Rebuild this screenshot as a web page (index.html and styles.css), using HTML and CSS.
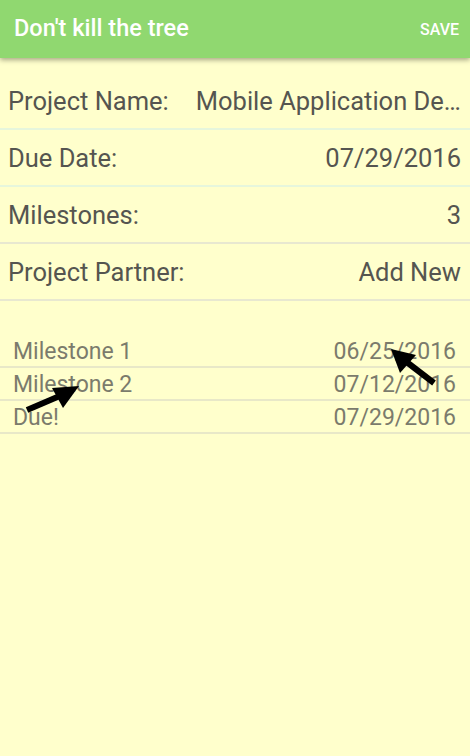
FILE: index.html
```html
<!DOCTYPE html>
<html>
<head>
<meta charset="utf-8">
<link rel="stylesheet" href="styles.css">
</head>
<body>
<div class="app">
  <header class="bar">
    <span class="title">Don't kill the tree</span>
    <span class="save">SAVE</span>
  </header>
  <main class="content">
    <div class="fields">
      <div class="row mint"><span class="label">Project Name:</span><span class="value ellipsis">Mobile Application Development</span></div>
      <div class="row mint"><span class="label">Due Date:</span><span class="value">07/29/2016</span></div>
      <div class="row grey"><span class="label">Milestones:</span><span class="value">3</span></div>
      <div class="row grey"><span class="label">Project Partner:</span><span class="value">Add New</span></div>
    </div>
    <div class="milestones">
      <div class="mrow"><span>Milestone 1</span><span>06/25/2016</span></div>
      <div class="mrow"><span>Milestone 2</span><span>07/12/2016</span></div>
      <div class="mrow"><span>Due!</span><span>07/29/2016</span></div>
    </div>
  </main>
  <svg class="arrows" width="470" height="756" viewBox="0 0 470 756">
    <line x1="434" y1="383" x2="404" y2="360" stroke="#000" stroke-width="6"/>
    <polygon points="391,349 416,355 400,373" fill="#000"/>
    <line x1="27" y1="410" x2="62" y2="395" stroke="#000" stroke-width="6"/>
    <polygon points="79,386 63,408 52,388" fill="#000"/>
  </svg>
</div>
</body>
</html>
```
FILE: styles.css
```css
* { box-sizing: border-box; }
html, body { margin: 0; padding: 0; }
body {
  width: 470px;
  height: 756px;
  background: #ffffcc;
  font-family: Roboto, "Noto Sans", sans-serif;
  overflow: hidden;
}
.app { position: relative; width: 470px; height: 756px; }
.bar {
  height: 58px;
  background: #90d870;
  display: flex;
  align-items: center;
  justify-content: space-between;
  padding: 0 11px 0 14px;
  box-shadow: 0 2px 5px rgba(0,0,0,0.35);
  position: relative;
  z-index: 1;
}
.title {
  color: #fff;
  font-size: 23.5px;
  font-weight: 500;
  padding-bottom: 2px;
}
.save {
  color: #fff;
  font-size: 16px;
  font-weight: 500;
}
.content { padding-top: 15px; }
.row {
  height: 57px;
  display: flex;
  align-items: center;
  justify-content: space-between;
  font-size: 25.5px;
  color: #555550;
  padding: 0 9px 0 8px;
}
.row.mint { border-bottom: 2px solid #e6f6dc; }
.row.grey { border-bottom: 2px solid #e8e8d0; }
.label { white-space: nowrap; flex: none; }
.value { white-space: nowrap; text-align: right; }
.ellipsis {
  overflow: hidden;
  text-overflow: ellipsis;
  margin-left: 27px;
  min-width: 0;
}
.milestones { margin-top: 34px; }
.mrow {
  height: 33px;
  display: flex;
  align-items: center;
  justify-content: space-between;
  padding: 2px 14px 0 13px;
  font-size: 23px;
  color: #7b7b6c;
  border-bottom: 2px solid #e8e8c8;
}
.arrows { position: absolute; left: 0; top: 0; pointer-events: none; }
```
